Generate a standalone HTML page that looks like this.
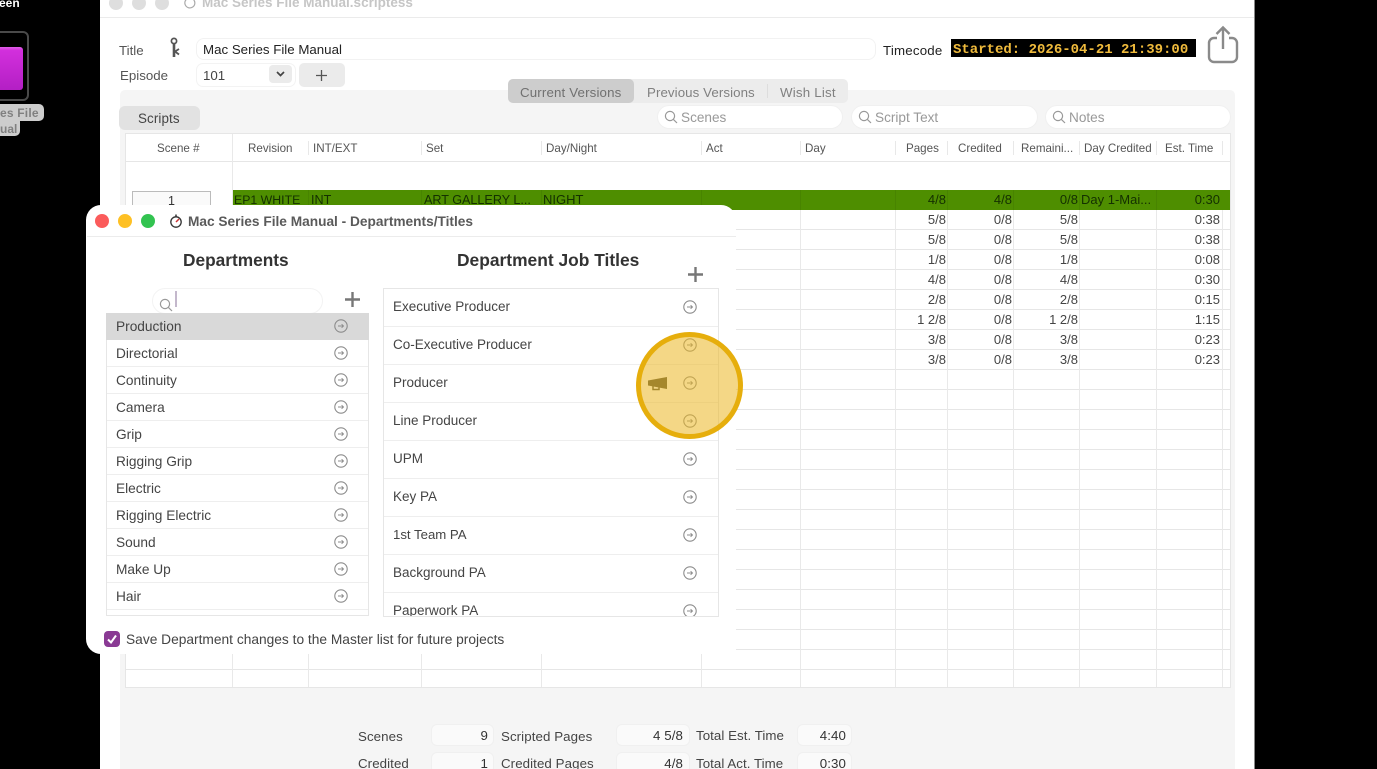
<!DOCTYPE html>
<html><head><meta charset="utf-8"><title>Mac Series File Manual</title>
<style>
html,body{margin:0;padding:0;background:#000;width:1377px;height:769px;overflow:hidden}
body{position:relative;font-family:"Liberation Sans",sans-serif;font-size:13px;color:#444;filter:blur(.3px)}
div,span,svg{position:absolute}
.t{position:absolute;white-space:nowrap;line-height:16px;transform:translateY(1px)}
.h{font-size:11.6px;color:#555;top:140px}
.v{width:1px;background:#e9e9e9;top:190px;height:497px}
.s{width:1px;background:#e8e8e8;top:141px;height:14px}
.gv{width:1px;background:rgba(0,0,0,.07);top:0;height:20px}
.r{text-align:right;width:70px}
.g{color:#143000}
.f{background:#fafafa;border:1px solid #f0f0f0;border-radius:6px;box-sizing:border-box}
.p{background:#fff;border-radius:12px;height:24px;top:105px;box-sizing:border-box;border:1px solid #f0f0f0}
.ph{color:#999;top:109px;font-size:13.6px}
.d{color:#444;left:116px;font-size:13.7px}
.j{color:#444;left:393px;font-size:13.5px}
.l{height:1px;background:#eee}
.b{font-size:13.3px;letter-spacing:.08px}
</style></head><body>
<svg width="0" height="0" style="position:absolute"><defs>
<g id="arr" fill="none" stroke="#8c8c8c"><circle cx="7" cy="7" r="6.200" stroke-width="1.100"/><path d="M4 7h5.600M7.600 5.200l1.900 1.800-1.900 1.800" stroke-width=".9"/></g>
<g id="mag" fill="none" stroke="#999" stroke-width="1.200"><circle cx="6" cy="6" r="4.600"/><path d="M9.400 9.400L13 13"/></g>
</defs></svg>

<!-- desktop -->
<span class="t" style="left:-1px;top:-6px;color:#fff;font-weight:bold;font-size:12px">een</span>
<div style="left:-30px;top:31px;width:55px;height:66px;border:2px solid #4a4a4a;border-radius:6px"></div>
<div style="left:-20px;top:47px;width:43px;height:43px;border-radius:3px;background:linear-gradient(#e060e8 0,#d22fdc 8%,#b31fc4 100%)"></div>
<div style="left:-10px;top:104px;width:54px;height:17px;background:#cdcdcd;border-radius:5px"></div>
<div style="left:-10px;top:120px;width:30px;height:16px;background:#cdcdcd;border-radius:0 0 5px 5px"></div>
<span class="t" style="left:0;top:104px;color:#808080;font-size:12px;font-weight:bold;letter-spacing:.2px">es File</span>
<span class="t" style="left:0;top:120px;color:#808080;font-size:12px;font-weight:bold">ual</span>

<!-- main window -->
<div style="left:100px;top:-10px;width:1155px;height:790px;background:#fff;border-right:1px solid #888;box-sizing:border-box"></div>
<div style="left:100px;top:17px;width:1154px;height:1px;background:#ebebeb"></div>
<div style="left:109px;top:-4px;width:14px;height:14px;border-radius:50%;background:#dedede"></div>
<div style="left:132px;top:-4px;width:14px;height:14px;border-radius:50%;background:#dedede"></div>
<div style="left:155px;top:-4px;width:14px;height:14px;border-radius:50%;background:#dedede"></div>
<svg style="left:184px;top:-3px" width="12" height="12"><path d="M9.500 2.500A5 5 0 1 1 5 1" fill="none" stroke="#aaa" stroke-width="1.200"/></svg>
<span class="t" style="left:202px;top:-6px;font-weight:bold;color:#c6c6c6;font-size:13.500px">Mac Series File Manual.scriptess</span>

<span class="t" style="left:119px;top:42px;color:#555;font-size:13.300px">Title</span>
<svg style="left:167px;top:37px" width="14" height="22" viewBox="0 0 14 22"><circle cx="7" cy="4" r="2.600" fill="none" stroke="#555" stroke-width="1.700"/><path d="M7 7v13" stroke="#555" stroke-width="2.600"/><path d="M8 14.500l4-2.500M8 14.500l4 3" stroke="#555" stroke-width="1.800" fill="none"/></svg>
<div style="left:196px;top:38px;width:680px;height:22px;border:1px solid #f2f2f2;border-radius:8px;box-sizing:border-box"></div>
<span class="t" style="left:203px;top:41px;color:#222;font-size:13.300px">Mac Series File Manual</span>
<span class="t" style="left:883px;top:42px;color:#222;font-size:13.300px;letter-spacing:.2px">Timecode</span>
<div style="left:951px;top:39px;width:245px;height:18px;background:#000"></div>
<span class="t" style="left:953px;top:41px;font-family:'Liberation Mono',monospace;font-size:14px;font-weight:bold;color:#f0bb3c">Started: 2026-04-21 21:39:00</span>
<svg style="left:1206px;top:25px" width="34" height="40" viewBox="0 0 34 40" fill="none" stroke="#8a8a8a" stroke-width="2.400"><path d="M11 13H8a5 5 0 0 0-5 5v14a5 5 0 0 0 5 5h18a5 5 0 0 0 5-5V18a5 5 0 0 0-5-5h-3"/><path d="M17 24V3M10.500 9L17 2.500 23.500 9"/></svg>

<span class="t" style="left:120px;top:67px;color:#555;font-size:13.300px">Episode</span>
<div style="left:196px;top:63px;width:100px;height:24px;border:1px solid #f3f3f3;border-radius:7px;box-sizing:border-box"></div>
<span class="t" style="left:203px;top:67px;color:#444;font-size:13.300px">101</span>
<div style="left:269px;top:65px;width:23px;height:18px;background:#ebebeb;border-radius:4px"></div>
<svg style="left:275px;top:70px" width="11" height="8"><path d="M2 2l3.500 3.500L9 2" fill="none" stroke="#444" stroke-width="1.700"/></svg>
<div style="left:299px;top:63px;width:46px;height:24px;background:#ebebeb;border-radius:5px"></div>
<svg style="left:315px;top:69px" width="13" height="13"><path d="M6.500 1v11M1 6.500h11" stroke="#555" stroke-width="1.300"/></svg>

<!-- panel -->
<div style="left:120px;top:90px;width:1115px;height:690px;background:#f5f5f5;border-radius:5px 5px 0 0"></div>
<div style="left:508px;top:79px;width:340px;height:24px;background:#ececec;border-radius:5px"></div>
<div style="left:508px;top:79px;width:126px;height:24px;background:#cdcdcd;border-radius:5px"></div>
<div style="left:767px;top:84px;width:1px;height:14px;background:#ddd"></div>
<span class="t b" style="left:520px;top:83.500px;color:#707070;letter-spacing:.15px">Current Versions</span>
<span class="t b" style="left:647px;top:83.500px;color:#808080">Previous Versions</span>
<span class="t b" style="left:780px;top:83.500px;color:#808080;letter-spacing:.2px">Wish List</span>

<div style="left:119px;top:106px;width:81px;height:24px;background:#e2e2e2;border-radius:6px"></div>
<span class="t" style="left:138px;top:110px;color:#444;font-size:13.400px;letter-spacing:.1px">Scripts</span>
<div class="p" style="left:657px;width:186px"></div>
<div class="p" style="left:851px;width:187px"></div>
<div class="p" style="left:1045px;width:186px"></div>
<svg style="left:664px;top:110px" width="14" height="14"><use href="#mag"/></svg>
<svg style="left:858px;top:110px" width="14" height="14"><use href="#mag"/></svg>
<svg style="left:1052px;top:110px" width="14" height="14"><use href="#mag"/></svg>
<span class="t ph" style="left:681px">Scenes</span>
<span class="t ph" style="left:875px">Script Text</span>
<span class="t ph" style="left:1069px">Notes</span>

<!-- table -->
<div style="left:125px;top:133px;width:1106px;height:555px;background:#fff;border:1px solid #e6e6e6;box-sizing:border-box"></div>
<div style="left:126px;top:161px;width:1104px;height:1px;background:#e6e6e6"></div>
<div style="left:126px;top:229px;width:1104px;height:441px;background:repeating-linear-gradient(to bottom,#e6e6e6 0,#e6e6e6 1px,transparent 1px,transparent 20px)"></div>
<div class="v" style="left:232px;top:134px;height:553px"></div>
<div class="v" style="left:308px"></div><div class="v" style="left:421px"></div><div class="v" style="left:541px"></div><div class="v" style="left:701px"></div><div class="v" style="left:800px"></div><div class="v" style="left:895px"></div><div class="v" style="left:947px"></div><div class="v" style="left:1013px"></div><div class="v" style="left:1079px"></div><div class="v" style="left:1156px"></div><div class="v" style="left:1222px"></div>
<div style="left:233px;top:190px;width:997px;height:20px;background:#4e8e00"><div class="gv" style="left:75px"></div><div class="gv" style="left:188px"></div><div class="gv" style="left:308px"></div><div class="gv" style="left:468px"></div><div class="gv" style="left:567px"></div><div class="gv" style="left:662px"></div><div class="gv" style="left:714px"></div><div class="gv" style="left:780px"></div><div class="gv" style="left:846px"></div><div class="gv" style="left:923px"></div></div>
<div class="s" style="left:308px"></div><div class="s" style="left:421px"></div><div class="s" style="left:541px"></div><div class="s" style="left:701px"></div><div class="s" style="left:800px"></div><div class="s" style="left:895px"></div><div class="s" style="left:947px"></div><div class="s" style="left:1013px"></div><div class="s" style="left:1079px"></div><div class="s" style="left:1156px"></div><div class="s" style="left:1222px"></div>
<div style="left:132px;top:191px;width:79px;height:24px;background:#fafafa;border:1px solid #bbb;box-sizing:border-box"></div>
<span class="t" style="left:168px;top:192px;color:#333;font-size:12.500px">1</span>

<span class="t h" style="left:157px">Scene #</span>
<span class="t h" style="left:248px">Revision</span>
<span class="t h" style="left:313px">INT/EXT</span>
<span class="t h" style="left:426px">Set</span>
<span class="t h" style="left:546px">Day/Night</span>
<span class="t h" style="left:706px">Act</span>
<span class="t h" style="left:805px">Day</span>
<span class="t h" style="left:906px">Pages</span>
<span class="t h" style="left:958px">Credited</span>
<span class="t h" style="left:1021px">Remaini...</span>
<span class="t h" style="left:1084px">Day Credited</span>
<span class="t h" style="left:1165px">Est. Time</span>

<span class="t g" style="left:234px;top:191px;font-size:12.300px">EP1 WHITE</span>
<span class="t g" style="left:311px;top:191px;font-size:12.600px">INT</span>
<span class="t g" style="left:424px;top:191px;font-size:12.600px">ART GALLERY L...</span>
<span class="t g" style="left:543px;top:191px">NIGHT</span>
<span class="t g" style="left:1081px;top:191px">Day 1-Mai...</span>

<span class="t r g" style="left:876px;top:191px">4/8</span><span class="t r g" style="left:942px;top:191px">4/8</span><span class="t r g" style="left:1008px;top:191px">0/8</span><span class="t r g" style="left:1150px;top:191px">0:30</span>
<span class="t r" style="left:876px;top:211px">5/8</span><span class="t r" style="left:942px;top:211px">0/8</span><span class="t r" style="left:1008px;top:211px">5/8</span><span class="t r" style="left:1150px;top:211px">0:38</span>
<span class="t r" style="left:876px;top:231px">5/8</span><span class="t r" style="left:942px;top:231px">0/8</span><span class="t r" style="left:1008px;top:231px">5/8</span><span class="t r" style="left:1150px;top:231px">0:38</span>
<span class="t r" style="left:876px;top:251px">1/8</span><span class="t r" style="left:942px;top:251px">0/8</span><span class="t r" style="left:1008px;top:251px">1/8</span><span class="t r" style="left:1150px;top:251px">0:08</span>
<span class="t r" style="left:876px;top:271px">4/8</span><span class="t r" style="left:942px;top:271px">0/8</span><span class="t r" style="left:1008px;top:271px">4/8</span><span class="t r" style="left:1150px;top:271px">0:30</span>
<span class="t r" style="left:876px;top:291px">2/8</span><span class="t r" style="left:942px;top:291px">0/8</span><span class="t r" style="left:1008px;top:291px">2/8</span><span class="t r" style="left:1150px;top:291px">0:15</span>
<span class="t r" style="left:876px;top:311px">1 2/8</span><span class="t r" style="left:942px;top:311px">0/8</span><span class="t r" style="left:1008px;top:311px">1 2/8</span><span class="t r" style="left:1150px;top:311px">1:15</span>
<span class="t r" style="left:876px;top:331px">3/8</span><span class="t r" style="left:942px;top:331px">0/8</span><span class="t r" style="left:1008px;top:331px">3/8</span><span class="t r" style="left:1150px;top:331px">0:23</span>
<span class="t r" style="left:876px;top:351px">3/8</span><span class="t r" style="left:942px;top:351px">0/8</span><span class="t r" style="left:1008px;top:351px">3/8</span><span class="t r" style="left:1150px;top:351px">0:23</span>

<!-- bottom stats -->
<div class="f" style="left:431px;top:724px;width:63px;height:22px"></div>
<div class="f" style="left:431px;top:752px;width:63px;height:22px"></div>
<div class="f" style="left:616px;top:724px;width:74px;height:22px"></div>
<div class="f" style="left:616px;top:752px;width:74px;height:22px"></div>
<div class="f" style="left:797px;top:724px;width:55px;height:22px"></div>
<div class="f" style="left:797px;top:752px;width:55px;height:22px"></div>
<span class="t b" style="left:358px;top:728px">Scenes</span>
<span class="t b" style="left:358px;top:755px">Credited</span>
<span class="t b" style="left:501px;top:728px">Scripted Pages</span>
<span class="t b" style="left:501px;top:755px">Credited Pages</span>
<span class="t b" style="left:696px;top:727px;letter-spacing:.05px">Total Est. Time</span>
<span class="t b" style="left:696px;top:754.500px;letter-spacing:.05px">Total Act. Time</span>
<span class="t r b" style="left:418px;top:727px;color:#333">9</span>
<span class="t r b" style="left:418px;top:755px;color:#333">1</span>
<span class="t r b" style="left:613px;top:727px;color:#333">4 5/8</span>
<span class="t r b" style="left:613px;top:755px;color:#333">4/8</span>
<span class="t r b" style="left:776px;top:727px;color:#333">4:40</span>
<span class="t r b" style="left:776px;top:755px;color:#333">0:30</span>

<!-- dialog -->
<div style="left:86px;top:205px;width:650px;height:449px;background:#fff;border-radius:15px 15px 4px 15px"></div>
<div style="left:87px;top:236px;width:649px;height:1px;background:#ececec"></div>
<div style="left:95px;top:214px;width:14px;height:14px;border-radius:50%;background:#fb5b5b"></div>
<div style="left:118px;top:214px;width:14px;height:14px;border-radius:50%;background:#fec024"></div>
<div style="left:141px;top:214px;width:14px;height:14px;border-radius:50%;background:#32c350"></div>
<svg style="left:169px;top:213px" width="14" height="16" viewBox="0 0 14 16" fill="none"><circle cx="7" cy="9" r="5.200" stroke="#333" stroke-width="1.300"/><path d="M7 1.500v3" stroke="#333" stroke-width="1.500"/><path d="M7 9l3-3" stroke="#c33" stroke-width="1.500"/></svg>
<span class="t" style="left:188px;top:213px;font-weight:bold;color:#5a5a5a;font-size:13.700px">Mac Series File Manual - Departments/Titles</span>

<span class="t" style="left:183px;top:250px;font-weight:bold;color:#333;font-size:17.300px;line-height:18px">Departments</span>
<span class="t" style="left:457px;top:250px;font-weight:bold;color:#333;font-size:17.400px;line-height:18px">Department Job Titles</span>

<div style="left:152px;top:288px;width:171px;height:26px;border:1px solid #f3f3f3;border-radius:13px;box-sizing:border-box"></div>
<svg style="left:159px;top:298px" width="14" height="14"><use href="#mag" style="stroke:#777"/></svg>
<div style="left:175px;top:291px;width:1.500px;height:16px;background:#c4b8cc"></div>
<svg style="left:344px;top:291px" width="17" height="17"><path d="M8.500 1v15M1 8.500h15" stroke="#777" stroke-width="2.400"/></svg>
<svg style="left:687px;top:266px" width="17" height="17"><path d="M8.500 1v15M1 8.500h15" stroke="#777" stroke-width="2.400"/></svg>

<!-- dept list -->
<div style="left:106px;top:313px;width:263px;height:303px;border:1px solid #e6e6e6;border-top:0;box-sizing:border-box"></div>
<div style="left:106px;top:313px;width:263px;height:27px;background:#d9d9d9"></div>
<div class="l" style="left:107px;top:366px;width:261px"></div><div class="l" style="left:107px;top:393px;width:261px"></div><div class="l" style="left:107px;top:420px;width:261px"></div><div class="l" style="left:107px;top:447px;width:261px"></div><div class="l" style="left:107px;top:474px;width:261px"></div><div class="l" style="left:107px;top:501px;width:261px"></div><div class="l" style="left:107px;top:528px;width:261px"></div><div class="l" style="left:107px;top:555px;width:261px"></div><div class="l" style="left:107px;top:582px;width:261px"></div><div class="l" style="left:107px;top:609px;width:261px"></div>
<span class="t d" style="top:318px">Production</span>
<span class="t d" style="top:345px">Directorial</span>
<span class="t d" style="top:372px">Continuity</span>
<span class="t d" style="top:399px">Camera</span>
<span class="t d" style="top:426px">Grip</span>
<span class="t d" style="top:453px">Rigging Grip</span>
<span class="t d" style="top:480px">Electric</span>
<span class="t d" style="top:507px">Rigging Electric</span>
<span class="t d" style="top:534px">Sound</span>
<span class="t d" style="top:561px">Make Up</span>
<span class="t d" style="top:588px">Hair</span>
<svg style="left:334px;top:319px" width="14" height="14"><use href="#arr"/></svg>
<svg style="left:334px;top:346px" width="14" height="14"><use href="#arr"/></svg>
<svg style="left:334px;top:373px" width="14" height="14"><use href="#arr"/></svg>
<svg style="left:334px;top:400px" width="14" height="14"><use href="#arr"/></svg>
<svg style="left:334px;top:427px" width="14" height="14"><use href="#arr"/></svg>
<svg style="left:334px;top:454px" width="14" height="14"><use href="#arr"/></svg>
<svg style="left:334px;top:481px" width="14" height="14"><use href="#arr"/></svg>
<svg style="left:334px;top:508px" width="14" height="14"><use href="#arr"/></svg>
<svg style="left:334px;top:535px" width="14" height="14"><use href="#arr"/></svg>
<svg style="left:334px;top:562px" width="14" height="14"><use href="#arr"/></svg>
<svg style="left:334px;top:589px" width="14" height="14"><use href="#arr"/></svg>

<!-- job list -->
<div style="left:383px;top:288px;width:336px;height:329px;border:1px solid #e6e6e6;box-sizing:border-box"></div>
<div class="l" style="left:384px;top:326px;width:334px"></div><div class="l" style="left:384px;top:364px;width:334px"></div><div class="l" style="left:384px;top:402px;width:334px"></div><div class="l" style="left:384px;top:440px;width:334px"></div><div class="l" style="left:384px;top:478px;width:334px"></div><div class="l" style="left:384px;top:516px;width:334px"></div><div class="l" style="left:384px;top:554px;width:334px"></div><div class="l" style="left:384px;top:592px;width:334px"></div>
<span class="t j" style="top:298px">Executive Producer</span>
<span class="t j" style="top:336px">Co-Executive Producer</span>
<span class="t j" style="top:374px">Producer</span>
<span class="t j" style="top:412px">Line Producer</span>
<span class="t j" style="top:450px">UPM</span>
<span class="t j" style="top:488px">Key PA</span>
<span class="t j" style="top:526px;font-size:13.200px">1st Team PA</span>
<span class="t j" style="top:564px">Background PA</span>
<div style="left:384px;top:593px;width:334px;height:23px;overflow:hidden"><span class="t j" style="left:9px;top:9px">Paperwork PA</span><svg style="left:299px;top:11px" width="14" height="14"><use href="#arr"/></svg></div>
<svg style="left:683px;top:300px" width="14" height="14"><use href="#arr"/></svg>
<svg style="left:683px;top:338px" width="14" height="14"><use href="#arr"/></svg>
<svg style="left:683px;top:376px" width="14" height="14"><use href="#arr"/></svg>
<svg style="left:683px;top:414px" width="14" height="14"><use href="#arr"/></svg>
<svg style="left:683px;top:452px" width="14" height="14"><use href="#arr"/></svg>
<svg style="left:683px;top:490px" width="14" height="14"><use href="#arr"/></svg>
<svg style="left:683px;top:528px" width="14" height="14"><use href="#arr"/></svg>
<svg style="left:683px;top:566px" width="14" height="14"><use href="#arr"/></svg>

<!-- checkbox -->
<div style="left:104px;top:631px;width:16px;height:16px;background:#8a3a94;border-radius:4px"></div>
<svg style="left:104px;top:631px" width="16" height="16"><path d="M4 8.500l3 3 5-7" fill="none" stroke="#fff" stroke-width="2"/></svg>
<span class="t" style="left:126px;top:631px;color:#444;font-size:13.750px">Save Department changes to the Master list for future projects</span>

<!-- highlight -->
<div style="left:636px;top:332px;width:107px;height:107px;border-radius:50%;box-sizing:border-box;border:5px solid #e6ae0c;background:rgba(236,184,40,.56)"></div>
<svg style="left:646px;top:376px" width="22" height="16" viewBox="0 0 22 16"><path d="M2 4.500L21 1v12L2 9.500z" fill="#a5872c"/><path d="M7 10v3.500h6v-2" fill="none" stroke="#a5872c" stroke-width="1.500"/></svg>
</body></html>
